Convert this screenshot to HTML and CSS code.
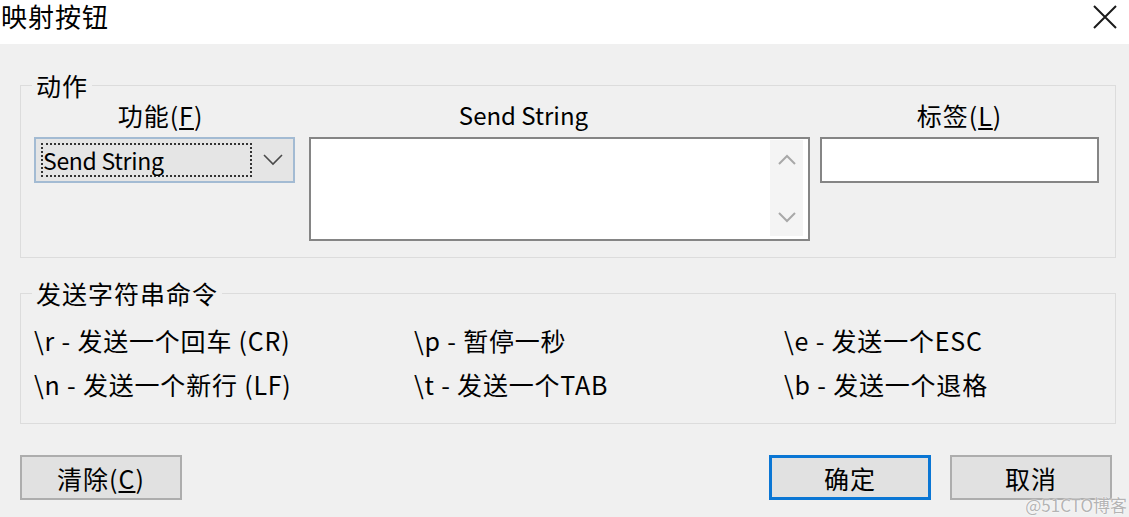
FILE: index.html
```html
<!DOCTYPE html>
<html lang="zh-CN">
<head>
<meta charset="utf-8">
<title>映射按钮</title>
<link rel="stylesheet" href="styles.css">
</head>
<body>
<div class="window">
  <div class="titlebar">
    <span class="title">映射按钮</span>
    <svg class="close" width="24" height="24" viewBox="0 0 24 24"><path d="M1 1 L23 23 M23 1 L1 23" stroke="#1a1a1a" stroke-width="2" fill="none"/></svg>
  </div>
  <div class="content">
    <fieldset class="group group-action">
      <legend>动作</legend>
      <div class="cols">
        <div class="col col-func">
          <div class="col-head">功能(<u>F</u>)</div>
          <div class="combo">
            <span class="combo-value">Send String</span>
            <svg class="chev" width="20" height="12" viewBox="0 0 20 12"><path d="M1 1 L10 10 L19 1" stroke="#4a4a4a" stroke-width="1.6" fill="none"/></svg>
          </div>
        </div>
        <div class="col col-str">
          <div class="col-head head-str">Send String</div>
          <div class="textarea">
            <div class="vscroll">
              <svg width="18" height="11" viewBox="0 0 18 11"><path d="M1 10 L9 2 L17 10" stroke="#a8a8a8" stroke-width="2" fill="none"/></svg>
              <svg width="18" height="11" viewBox="0 0 18 11"><path d="M1 1 L9 9 L17 1" stroke="#a8a8a8" stroke-width="2" fill="none"/></svg>
            </div>
          </div>
        </div>
        <div class="col col-label">
          <div class="col-head">标签(<u>L</u>)</div>
          <div class="input"></div>
        </div>
      </div>
    </fieldset>

    <fieldset class="group group-cmds">
      <legend>发送字符串命令</legend>
      <div class="cmd-grid">
        <span class="cmd">\r - 发送一个回车 (CR)</span>
        <span class="cmd">\p - 暂停一秒</span>
        <span class="cmd">\e - 发送一个ESC</span>
        <span class="cmd">\n - 发送一个新行 (LF)</span>
        <span class="cmd">\t - 发送一个TAB</span>
        <span class="cmd">\b - 发送一个退格</span>
      </div>
    </fieldset>

    <div class="buttons">
      <button class="btn">清除(<u>C</u>)</button>
      <span class="spacer"></span>
      <button class="btn btn-default">确定</button>
      <button class="btn">取消</button>
    </div>
  </div>
  <span class="watermark">@51CTO博客</span>
</div>
</body>
</html>
```

FILE: styles.css
```css
* { box-sizing: border-box; }
html, body { margin: 0; padding: 0; }
body {
  width: 1129px;
  height: 517px;
  overflow: hidden;
  font-family: "Noto Sans CJK SC", "Noto Sans", sans-serif;
  font-size: 25px;
  color: #000;
  background: #f0f0f0;
}
.window {
  position: relative;
  height: 517px;
  display: flex;
  flex-direction: column;
}
.titlebar {
  height: 44px;
  background: #fff;
  display: flex;
  align-items: flex-start;
  justify-content: space-between;
  padding: 0 12px 0 1px;
}
.title {
  line-height: 32px;
  font-size: 26px;
  letter-spacing: 1px;
}
.close { margin-top: 5px; }

.content {
  flex: 1;
  padding: 0 13px 0 20px;
  display: flex;
  flex-direction: column;
}
.group {
  margin: 0;
  border: 1px solid #dcdcdc;
  min-width: 0;
}
.group legend {
  padding: 0 4px;
  margin-left: -2px;
  line-height: 26px;
  letter-spacing: 1px;
}
.group-action {
  margin-top: 28px;
  padding: 4px 16px 16px 13px;
}
.cols {
  display: flex;
  align-items: flex-start;
}
.col { display: flex; flex-direction: column; }
.col-func { width: 261px; margin-right: 14px; }
.col-str { width: 501px; margin-right: 10px; }
.col-label { width: 279px; }
.col-head {
  line-height: 26px;
  text-align: center;
  margin-bottom: 9px;
  letter-spacing: 1px;
}
.col-func .col-head { padding-right: 8px; }
.head-str {
  font-size: 24px;
  letter-spacing: 0;
  padding-right: 72px;
}
.combo {
  height: 46px;
  background: #e5e5e5;
  border: 2px solid #a3bbd3;
  display: flex;
  align-items: center;
  padding: 0 10px 0 5px;
}
.combo-value {
  width: 211px;
  height: 34px;
  line-height: 30px;
  font-size: 23px;
  letter-spacing: -0.3px;
  border: 2px dotted #333;
  padding-left: 0;
}
.chev { margin-left: auto; }
.textarea {
  height: 104px;
  background: #fff;
  border: 2px solid #858585;
  display: flex;
  justify-content: flex-end;
  padding: 1px 5px 3px 0;
}
.vscroll {
  width: 33px;
  background: #f4f4f4;
  display: flex;
  flex-direction: column;
  align-items: center;
  justify-content: space-between;
  padding: 14px 0 13px;
}
.input {
  height: 46px;
  background: #fff;
  border: 2px solid #858585;
}

.group-cmds {
  margin-top: 22px;
  padding: 12px 16px 17px 13px;
}
.cmd-grid {
  display: grid;
  grid-template-columns: 380px 370px 1fr;
  grid-auto-rows: 44px;
  align-items: center;
}
.cmd {
  white-space: nowrap;
  letter-spacing: 0.8px;
}

.buttons {
  margin-top: 31px;
  margin-right: 4px;
  display: flex;
  gap: 19px;
}
.spacer { flex: 1; }
.btn {
  width: 162px;
  height: 45px;
  background: #e1e1e1;
  border: 2px solid #adadad;
  font-family: inherit;
  font-size: 25px;
  color: #000;
  padding: 0;
  letter-spacing: 1px;
}
.btn-default {
  border: 3px solid #0a76d4;
}
.watermark {
  position: absolute;
  right: 2px;
  bottom: 3px;
  font-size: 17px;
  line-height: 18px;
  color: #b4b4b4;
  text-shadow: 0 0 2px #fff, 0 0 1px #fff;
  letter-spacing: 0;
}
```
